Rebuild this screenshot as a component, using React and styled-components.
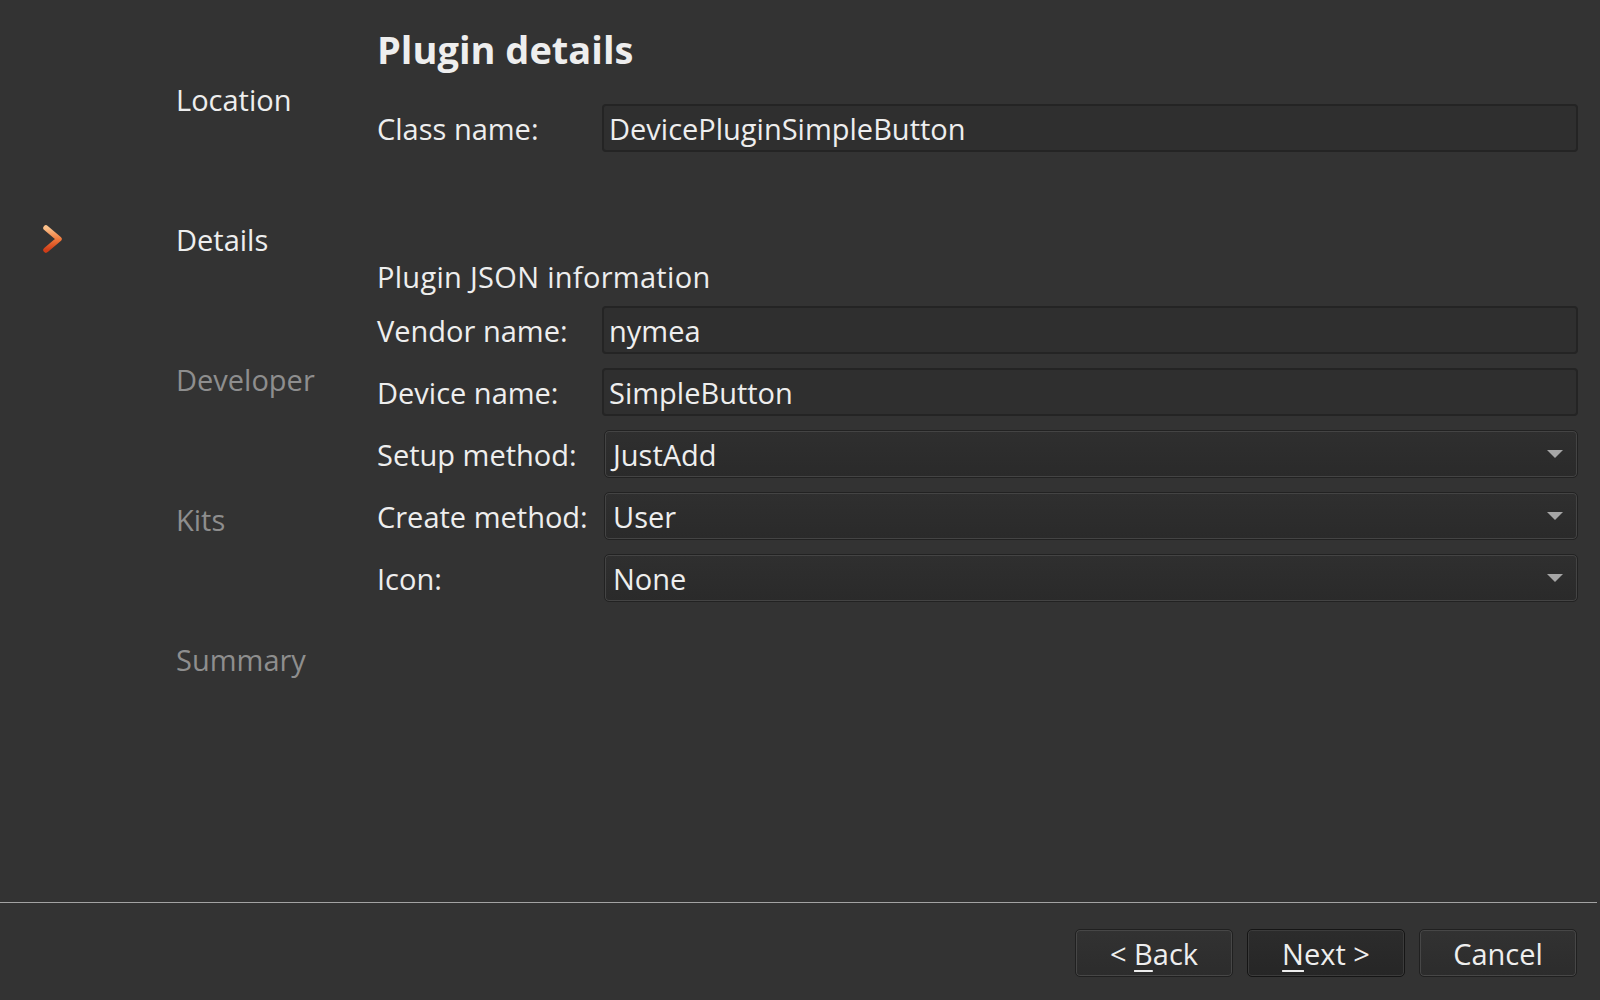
import React from "react";
import styled, { createGlobalStyle } from "styled-components";

const GlobalStyle = createGlobalStyle`
  html, body {
    margin: 0;
    padding: 0;
    background: #333333;
  }
  body {
    font-family: "Open Sans", "DejaVu Sans", sans-serif;
    color: #eeeeee;
  }
`;

const Window = styled.div`
  width: 1600px;
  height: 1000px;
  display: flex;
  flex-direction: column;
  background: #333333;
`;

const Main = styled.div`
  flex: 1;
  display: flex;
`;

const Sidebar = styled.ul`
  list-style: none;
  margin: 0;
  padding: 29px 0 0 0;
  width: 377px;
  flex-shrink: 0;
`;

const Step = styled.li`
  height: 140px;
  display: flex;
  align-items: center;
  font-size: 29px;
  color: ${(p) => (p.$done ? "#eeeeee" : "#8e8e8e")};
`;

const Marker = styled.span`
  width: 176px;
  flex-shrink: 0;
  display: flex;
  align-items: center;
  padding-left: 40px;
  box-sizing: border-box;
`;

const Content = styled.div`
  flex: 1;
  padding: 25px 22px 0 0;
`;

const Title = styled.h1`
  margin: 0;
  font-size: 38px;
  line-height: 48px;
  font-weight: 700;
  color: #eeeeee;
`;

const Form = styled.div`
  display: grid;
  grid-template-columns: 225px 1fr;
  row-gap: 14px;
  align-items: center;
  margin-top: ${(p) => p.$top || 0}px;
`;

const Label = styled.label`
  font-size: 29px;
  white-space: nowrap;
`;

const SectionLabel = styled.div`
  margin-top: 104px;
  height: 40px;
  display: flex;
  align-items: center;
  font-size: 29px;
  letter-spacing: 0.3px;
`;

const TextField = styled.input`
  height: 48px;
  box-sizing: border-box;
  width: 100%;
  border: 2px solid #242424;
  border-radius: 4px;
  background: #2f2f2f;
  color: #eeeeee;
  font-family: inherit;
  font-size: 29px;
  padding: 0 5px;
  outline: none;
`;

const Combo = styled.div`
  height: 48px;
  margin-left: 2px;
  box-sizing: border-box;
  display: flex;
  align-items: center;
  justify-content: space-between;
  border: 1px solid #222222;
  border-radius: 5px;
  box-shadow: inset 0 0 0 1px #444444;
  background: linear-gradient(#2f2f2f, #2a2a2a);
  padding: 0 14px 0 8px;
  font-size: 29px;
`;

const Footer = styled.div`
  height: 98px;
  box-sizing: border-box;
  border-top: 1px solid #a3a3a3;
  margin-right: 3px;
  display: flex;
  justify-content: flex-end;
  align-items: flex-start;
  gap: 14px;
  padding: 26px 20px 0 0;
`;

const Button = styled.button`
  width: 158px;
  height: 48px;
  border: 1px solid ${(p) => (p.$default ? "#151515" : "#202020")};
  border-radius: 5px;
  box-shadow: inset 0 0 0 1px ${(p) => (p.$default ? "#3c3c3c" : "#474747")};
  background: ${(p) =>
    p.$default
      ? "linear-gradient(#2c2c2c, #262626)"
      : "linear-gradient(#323232, #2c2c2c)"};
  color: #eeeeee;
  font-family: inherit;
  font-size: 29px;
  padding: 0;

  u {
    text-underline-offset: 5px;
    text-decoration-thickness: 2px;
  }
`;

const Chevron = () => (
  <svg width="26" height="32" viewBox="0 0 26 32">
    <defs>
      <linearGradient id="chev" x1="0" y1="0" x2="0" y2="1">
        <stop offset="0" stopColor="#fbc08a" />
        <stop offset="0.5" stopColor="#f07a3c" />
        <stop offset="1" stopColor="#cf3d18" />
      </linearGradient>
    </defs>
    <path
      d="M6 5 L19 16 L6 27"
      fill="none"
      stroke="url(#chev)"
      strokeWidth="5.5"
      strokeLinecap="round"
      strokeLinejoin="round"
    />
  </svg>
);

const Arrow = () => (
  <svg width="16" height="8" viewBox="0 0 16 8">
    <path d="M0 0 H16 L8 8 Z" fill="#a6a6a6" />
  </svg>
);

const steps = [
  { name: "Location", done: true },
  { name: "Details", done: true, current: true },
  { name: "Developer" },
  { name: "Kits" },
  { name: "Summary" },
];

function App() {
  return (
    <Window>
      <GlobalStyle />
      <Main>
        <Sidebar>
          {steps.map((s) => (
            <Step key={s.name} $done={s.done}>
              <Marker>{s.current && <Chevron />}</Marker>
              {s.name}
            </Step>
          ))}
        </Sidebar>

        <Content>
          <Title>Plugin details</Title>

          <Form $top={31}>
            <Label>Class name:</Label>
            <TextField readOnly defaultValue="DevicePluginSimpleButton" />
          </Form>

          <SectionLabel>Plugin JSON information</SectionLabel>

          <Form $top={10}>
            <Label>Vendor name:</Label>
            <TextField readOnly defaultValue="nymea" />
            <Label>Device name:</Label>
            <TextField readOnly defaultValue="SimpleButton" />
            <Label>Setup method:</Label>
            <Combo>
              JustAdd
              <Arrow />
            </Combo>
            <Label>Create method:</Label>
            <Combo>
              User
              <Arrow />
            </Combo>
            <Label>Icon:</Label>
            <Combo>
              None
              <Arrow />
            </Combo>
          </Form>
        </Content>
      </Main>

      <Footer>
        <Button>
          &lt; <u>B</u>ack
        </Button>
        <Button $default>
          <u>N</u>ext &gt;
        </Button>
        <Button>Cancel</Button>
      </Footer>
    </Window>
  );
}

export default App;
